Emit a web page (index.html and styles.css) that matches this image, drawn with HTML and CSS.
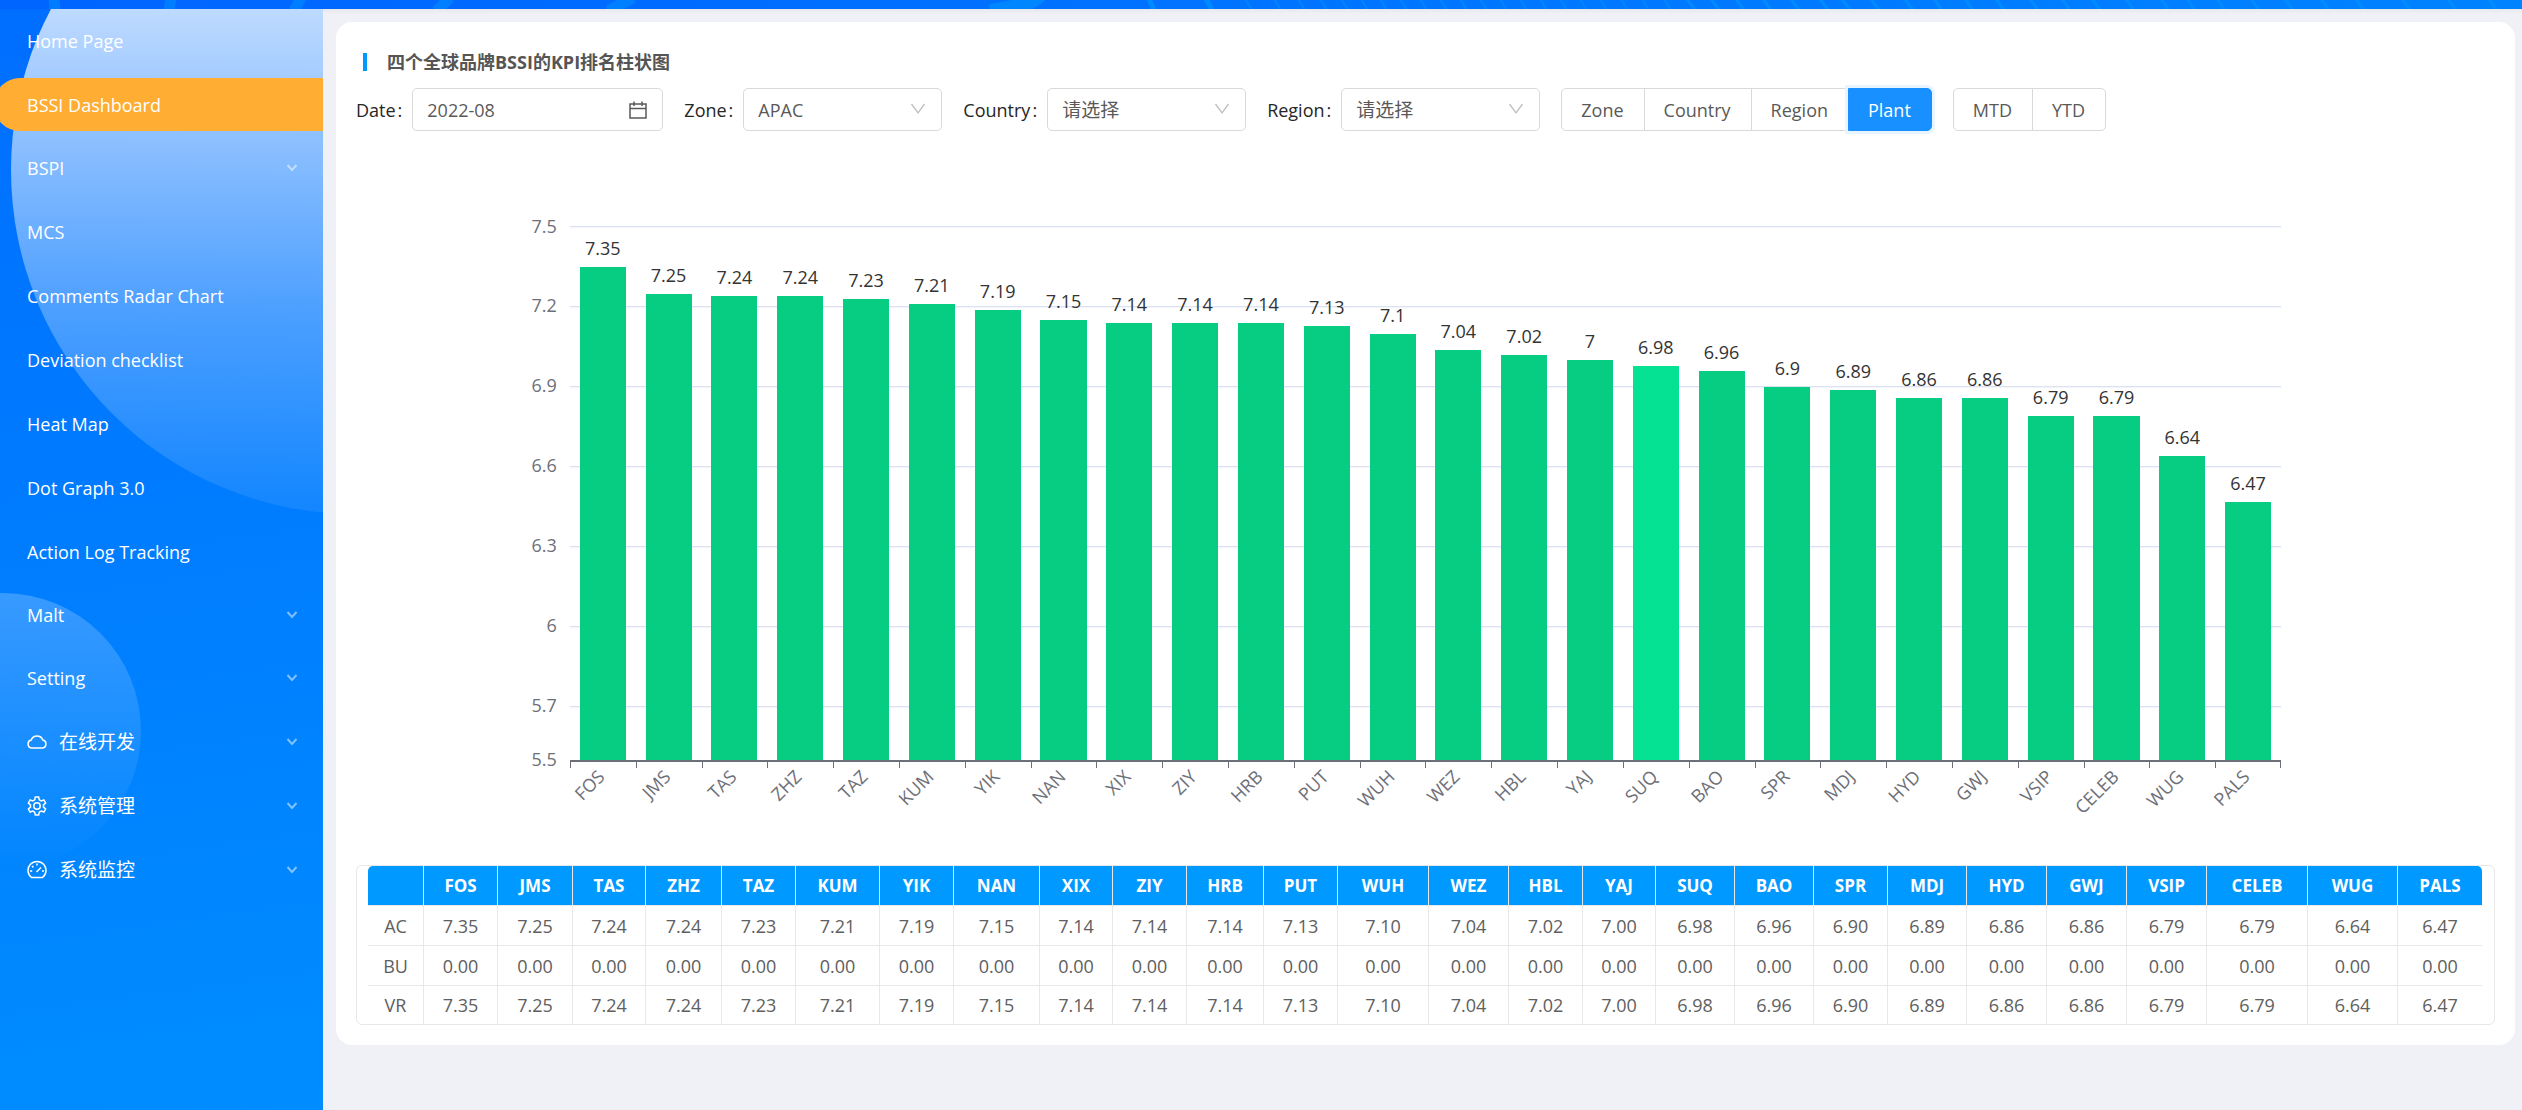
FILE: index.html
```html
<!DOCTYPE html>
<html lang="zh-CN">
<head>
<meta charset="utf-8">
<meta name="viewport" content="width=device-width, initial-scale=1">
<title>BSSI Dashboard</title>
<link rel="stylesheet" href="styles.css">
</head>
<body>
<svg width="0" height="0" class="sprite" aria-hidden="true">
  <symbol id="down" viewBox="0 0 12 12"><path d="M1.500 3 6 8l4.500-5" fill="none" stroke="currentColor" stroke-width="2"/></symbol>
  <symbol id="caret" viewBox="0 0 16 16"><path d="M1.500 3 8 12l6.500-9" fill="none" stroke="currentColor" stroke-width="1.300"/></symbol>
</svg>

<header class="topbar">
  <svg width="2522" height="9" viewBox="0 0 2522 9" aria-hidden="true">
    <g fill="none" stroke="#0090ff">
      <path stroke-opacity=".55" stroke-width="11" d="M54-1 55 10M171-1 169 10M301-2 294 11M450-2 436 11M633-2 608 11"/>
      <path stroke-opacity=".7" stroke-width="16" d="M1040-6Q1026 8 990 12"/>
      <path stroke-opacity=".8" stroke-width="5" d="M1149-1 1154 10M1206-1 1212 10"/>
      <path stroke-opacity=".6" stroke-width="2" d="M1245-1 1252 10M1274-1 1281 10M1298-1 1305 10M1320-1 1327 10M1341-1 1348 10M1361-1 1368 10M1380-1 1387 10M1400-1 1407 10M1420-1 1427 10M1440-1 1447 10M1460-1 1467 10M1480-1 1487 10M1500-1 1507 10M1520-1 1527 10M1540-1 1547 10M1560-1 1567 10M1580-1 1587 10M1600-1 1607 10M1621-1 1628 10M1642-1 1649 10M1664-1 1671 10"/>
      <path stroke-opacity=".8" stroke-width="3" d="M1687-1 1695 10M1711-1 1719 10M1736-1 1744 10M1763-1 1771 10M1791-1 1799 10M1820-1 1828 10M1842-1 1850 10M1871-1 1879 10M1905-1 1913 10M1934-1 1942 10M1965-1 1973 10M1996-1 2004 10M2030-1 2038 10M2062-1 2070 10M2092-1 2100 10M2126-1 2134 10M2161-1 2169 10M2187-1 2195 10M2217-1 2225 10M2251-1 2259 10M2285-1 2293 10M2321-1 2329 10M2356-1 2364 10M2402-1 2410 10M2448-1 2456 10M2489-1 2497 10"/>
    </g>
  </svg>
</header>

<div class="layout">
  <nav class="sidebar" aria-label="Main">
    <ul class="menu">
      <li><a class="item" href="#">Home Page</a></li>
      <li><a class="item active" href="#" aria-current="page">BSSI Dashboard</a></li>
      <li><button class="item sub" type="button"><span class="label">BSPI</span><svg class="down"><use href="#down"/></svg></button></li>
      <li><a class="item" href="#">MCS</a></li>
      <li><a class="item" href="#">Comments Radar Chart</a></li>
      <li><a class="item" href="#">Deviation checklist</a></li>
      <li><a class="item" href="#">Heat Map</a></li>
      <li><a class="item" href="#">Dot Graph 3.0</a></li>
      <li><a class="item" href="#">Action Log Tracking</a></li>
      <li><button class="item sub" type="button"><span class="label">Malt</span><svg class="down"><use href="#down"/></svg></button></li>
      <li><button class="item sub" type="button"><span class="label">Setting</span><svg class="down"><use href="#down"/></svg></button></li>
      <li><button class="item zh" type="button">
        <svg class="icon" viewBox="0 0 20 20"><path d="M5 16a4 4 0 0 1-.8-7.900 6.200 6.200 0 0 1 11.600 0A4 4 0 0 1 15 16z"/></svg>
        <span class="label">在线开发</span><svg class="down"><use href="#down"/></svg></button></li>
      <li><button class="item zh" type="button">
        <svg class="icon" viewBox="0 0 20 20"><path d="M8.300 1h3.400l.6 2.800 1.900 1.100 2.700-.9 1.700 3-2.100 1.900v2.200l2.100 1.900-1.700 3-2.700-.9-1.900 1.100-.6 2.800H8.300l-.6-2.800-1.900-1.100-2.700.9-1.700-3 2.100-1.900V8.900L1.400 7l1.700-3 2.700.9 1.900-1.100z"/><circle cx="10" cy="10" r="3.200"/></svg>
        <span class="label">系统管理</span><svg class="down"><use href="#down"/></svg></button></li>
      <li><button class="item zh" type="button">
        <svg class="icon" viewBox="0 0 20 20"><path d="M4.500 17.500a9 9 0 1 1 11 0zM10 3.500v2M3 11h2.200M15 11h2M5 6l1.400 1.400M9.500 12l4.500-4.500"/></svg>
        <span class="label">系统监控</span><svg class="down"><use href="#down"/></svg></button></li>
    </ul>
  </nav>

  <main class="content">
    <section class="card">
      <h1 class="title">四个全球品牌BSSI的KPI排名柱状图</h1>

      <form class="filters">
        <div class="field"><label for="date">Date<span class="colon">:</span></label>
          <span class="control date"><input id="date" type="text" value="2022-08">
            <svg class="cal" viewBox="0 0 18 18"><path d="M1 3h16v14H1zM1 7.500h16M5 .5V5M13 .5V5"/></svg></span></div>
        <div class="field"><label for="zone">Zone<span class="colon">:</span></label>
          <span class="control"><select id="zone"><option>APAC</option></select><svg class="caret"><use href="#caret"/></svg></span></div>
        <div class="field"><label for="country">Country<span class="colon">:</span></label>
          <span class="control"><select id="country" class="zh"><option>请选择</option></select><svg class="caret"><use href="#caret"/></svg></span></div>
        <div class="field"><label for="region">Region<span class="colon">:</span></label>
          <span class="control"><select id="region" class="zh"><option>请选择</option></select><svg class="caret"><use href="#caret"/></svg></span></div>
        <div class="group">
          <button type="button">Zone</button><button type="button">Country</button><button type="button">Region</button><button type="button" class="on">Plant</button>
        </div>
        <div class="group">
          <button type="button">MTD</button><button type="button">YTD</button>
        </div>
      </form>

      <figure class="chart">
        <div class="plot">
          <div class="scale">
            <span style="--v:7.5"><i>7.5</i></span><span style="--v:7.2"><i>7.2</i></span><span style="--v:6.9"><i>6.9</i></span><span style="--v:6.6"><i>6.6</i></span><span style="--v:6.3"><i>6.3</i></span><span style="--v:6"><i>6</i></span><span style="--v:5.7"><i>5.7</i></span><span class="base" style="--v:5.5"><i>5.5</i></span>
          </div>
          <div class="bars">
            <div class="band"><span>7.35</span><b style="--v:7.35"></b></div>
            <div class="band"><span>7.25</span><b style="--v:7.25"></b></div>
            <div class="band"><span>7.24</span><b style="--v:7.24"></b></div>
            <div class="band"><span>7.24</span><b style="--v:7.24"></b></div>
            <div class="band"><span>7.23</span><b style="--v:7.23"></b></div>
            <div class="band"><span>7.21</span><b style="--v:7.21"></b></div>
            <div class="band"><span>7.19</span><b style="--v:7.19"></b></div>
            <div class="band"><span>7.15</span><b style="--v:7.15"></b></div>
            <div class="band"><span>7.14</span><b style="--v:7.14"></b></div>
            <div class="band"><span>7.14</span><b style="--v:7.14"></b></div>
            <div class="band"><span>7.14</span><b style="--v:7.14"></b></div>
            <div class="band"><span>7.13</span><b style="--v:7.13"></b></div>
            <div class="band"><span>7.1</span><b style="--v:7.1"></b></div>
            <div class="band"><span>7.04</span><b style="--v:7.04"></b></div>
            <div class="band"><span>7.02</span><b style="--v:7.02"></b></div>
            <div class="band"><span>7</span><b style="--v:7"></b></div>
            <div class="band hover"><span>6.98</span><b style="--v:6.98"></b></div>
            <div class="band"><span>6.96</span><b style="--v:6.96"></b></div>
            <div class="band"><span>6.9</span><b style="--v:6.9"></b></div>
            <div class="band"><span>6.89</span><b style="--v:6.89"></b></div>
            <div class="band"><span>6.86</span><b style="--v:6.86"></b></div>
            <div class="band"><span>6.86</span><b style="--v:6.86"></b></div>
            <div class="band"><span>6.79</span><b style="--v:6.79"></b></div>
            <div class="band"><span>6.79</span><b style="--v:6.79"></b></div>
            <div class="band"><span>6.64</span><b style="--v:6.64"></b></div>
            <div class="band"><span>6.47</span><b style="--v:6.47"></b></div>
          </div>
        </div>
        <div class="axis">
          <div><span>FOS</span></div><div><span>JMS</span></div><div><span>TAS</span></div><div><span>ZHZ</span></div><div><span>TAZ</span></div><div><span>KUM</span></div><div><span>YIK</span></div><div><span>NAN</span></div><div><span>XIX</span></div><div><span>ZIY</span></div><div><span>HRB</span></div><div><span>PUT</span></div><div><span>WUH</span></div><div><span>WEZ</span></div><div><span>HBL</span></div><div><span>YAJ</span></div><div><span>SUQ</span></div><div><span>BAO</span></div><div><span>SPR</span></div><div><span>MDJ</span></div><div><span>HYD</span></div><div><span>GWJ</span></div><div><span>VSIP</span></div><div><span>CELEB</span></div><div><span>WUG</span></div><div><span>PALS</span></div>
        </div>
      </figure>

      <div class="table-box">
        <table>
          <colgroup>
            <col width="56"><col width="74"><col width="75"><col width="73"><col width="76"><col width="74"><col width="84"><col width="74"><col width="86"><col width="73"><col width="74"><col width="77"><col width="74"><col width="91"><col width="80"><col width="74"><col width="73"><col width="79"><col width="79"><col width="74"><col width="79"><col width="80"><col width="80"><col width="80"><col width="101"><col width="90"><col width="84">
          </colgroup>
          <thead>
            <tr><th></th><th>FOS</th><th>JMS</th><th>TAS</th><th>ZHZ</th><th>TAZ</th><th>KUM</th><th>YIK</th><th>NAN</th><th>XIX</th><th>ZIY</th><th>HRB</th><th>PUT</th><th>WUH</th><th>WEZ</th><th>HBL</th><th>YAJ</th><th>SUQ</th><th>BAO</th><th>SPR</th><th>MDJ</th><th>HYD</th><th>GWJ</th><th>VSIP</th><th>CELEB</th><th>WUG</th><th>PALS</th></tr>
          </thead>
          <tbody>
            <tr><td>AC</td><td>7.35</td><td>7.25</td><td>7.24</td><td>7.24</td><td>7.23</td><td>7.21</td><td>7.19</td><td>7.15</td><td>7.14</td><td>7.14</td><td>7.14</td><td>7.13</td><td>7.10</td><td>7.04</td><td>7.02</td><td>7.00</td><td>6.98</td><td>6.96</td><td>6.90</td><td>6.89</td><td>6.86</td><td>6.86</td><td>6.79</td><td>6.79</td><td>6.64</td><td>6.47</td></tr>
            <tr><td>BU</td><td>0.00</td><td>0.00</td><td>0.00</td><td>0.00</td><td>0.00</td><td>0.00</td><td>0.00</td><td>0.00</td><td>0.00</td><td>0.00</td><td>0.00</td><td>0.00</td><td>0.00</td><td>0.00</td><td>0.00</td><td>0.00</td><td>0.00</td><td>0.00</td><td>0.00</td><td>0.00</td><td>0.00</td><td>0.00</td><td>0.00</td><td>0.00</td><td>0.00</td><td>0.00</td></tr>
            <tr><td>VR</td><td>7.35</td><td>7.25</td><td>7.24</td><td>7.24</td><td>7.23</td><td>7.21</td><td>7.19</td><td>7.15</td><td>7.14</td><td>7.14</td><td>7.14</td><td>7.13</td><td>7.10</td><td>7.04</td><td>7.02</td><td>7.00</td><td>6.98</td><td>6.96</td><td>6.90</td><td>6.89</td><td>6.86</td><td>6.86</td><td>6.79</td><td>6.79</td><td>6.64</td><td>6.47</td></tr>
          </tbody>
        </table>
      </div>
    </section>
  </main>
</div>
</body>
</html>
```

FILE: styles.css
```css
* { box-sizing: border-box; }

body {
  margin: 0;
  min-height: 100vh;
  display: flex;
  flex-direction: column;
  background: #f0f1f6;
  color: #606266;
  font: 18px/24px "Open Sans", "Noto Sans CJK SC", sans-serif;
}

button, input, select { font: inherit; color: inherit; margin: 0; }
.sprite { position: absolute; }
.zh { font-size: 19px; }

/* top bar */
.topbar {
  height: 9px;
  overflow: hidden;
  background: linear-gradient(90deg, #0064ff, #0083ff);
}
.topbar svg { display: block; }

.layout { flex: 1; display: flex; }

/* sidebar */
.sidebar {
  flex: none;
  width: 323px;
  position: relative;
  overflow: hidden;
  background: linear-gradient(172deg, #006eff, #008dff);
}
.sidebar::before, .sidebar::after {
  content: "";
  position: absolute;
  border-radius: 50%;
}
.sidebar::before {
  width: 688px;
  height: 688px;
  left: 11px;
  top: -183px;
  background: linear-gradient(180deg, rgba(255, 255, 255, .95), rgba(255, 255, 255, .74) 27%, rgba(255, 255, 255, .3) 70%, rgba(255, 255, 255, .07));
}
.sidebar::after {
  width: 276px;
  height: 276px;
  left: -135px;
  top: 584px;
  background: linear-gradient(180deg, rgba(255, 255, 255, .22), rgba(255, 255, 255, 0));
}
.menu {
  position: relative;
  z-index: 1;
  list-style: none;
  margin: 0;
  padding: 5px 0 0;
  display: flex;
  flex-direction: column;
  gap: 11px;
}
.menu li { margin-left: -6px; }
.item {
  width: 100%;
  height: 53px;
  padding: 0 25px 0 33px;
  display: flex;
  align-items: center;
  border: 0;
  background: none;
  color: #fff;
  text-align: left;
  text-decoration: none;
}
.sub { height: 52px; }
.item.active { background: #ffad33; border-radius: 26px 0 0 26px; }
.item .label { flex: 1; }
.item .down { width: 12px; height: 12px; opacity: .5; }
.icon {
  width: 20px;
  height: 20px;
  margin-right: 12px;
  fill: none;
  stroke: currentColor;
  stroke-width: 1.5;
}

/* card */
.content {
  flex: 1;
  min-width: 0;
  padding: 13px 7px 13px 13px;
  background: linear-gradient(#e6e8ec, #f0f1f6 5px);
}
.card {
  background: #fff;
  border-radius: 16px;
  padding: 27px 20px 20px;
}
.title {
  margin: 0 0 13px 7px;
  display: flex;
  align-items: center;
  gap: 20px;
  font-size: 18px;
  line-height: 26px;
  font-weight: 700;
  color: #555;
}
.title::before { content: ""; width: 4px; height: 18px; background: #09f; }

/* filters */
.filters { display: flex; flex-wrap: wrap; gap: 21px; }
.field { display: flex; align-items: center; }
.field label { color: #262626; margin-right: 10px; white-space: nowrap; }
.colon { margin-left: 2px; }
.control { display: block; position: relative; width: 199px; }
.control.date { width: 251px; }
.control input, .control select {
  display: block;
  width: 100%;
  height: 43px;
  padding: 0 14px;
  border: 1px solid #d9d9d9;
  border-radius: 5px;
  background: #fff;
  appearance: none;
  color: #595959;
}
.caret, .cal { position: absolute; top: 50%; margin-top: -9px; pointer-events: none; }
.caret { width: 16px; height: 16px; right: 16px; color: #bfbfbf; }
.cal { width: 18px; height: 18px; right: 16px; fill: none; stroke: #595959; stroke-width: 1.5; }
.group { display: flex; }
.group button {
  height: 43px;
  padding: 0 20px 0 19px;
  margin-left: -1px;
  border: 1px solid #d9d9d9;
  background: #fff;
  color: #595959;
}
.group button:first-child { border-radius: 5px 0 0 5px; margin-left: 0; }
.group button:last-child { border-radius: 0 5px 5px 0; }
.group .on {
  background: #1890ff;
  border-color: #1890ff;
  color: #fff;
  box-shadow: 0 0 0 3px #e8f4ff;
}

/* chart */
.chart { margin: 96px 0 0; padding: 0 10%; color: #6e7079; }
.plot { position: relative; height: 533px; }
.scale span {
  position: absolute;
  left: -61px;
  right: 0;
  bottom: calc((var(--v) - 5.5) / 2 * 100%);
  height: 1px;
  display: flex;
  align-items: center;
  gap: 13px;
}
.scale span::after { content: ""; flex: 1; height: 1px; background: #dbe2f0; box-shadow: 0 1px #f3f5fa; }
.scale .base::after { background: none; box-shadow: none; }
.scale i { width: 48px; margin-top: -2px; font-style: normal; text-align: right; }
.bars {
  position: relative;
  display: flex;
  height: 100%;
}
.band {
  flex: 1;
  display: flex;
  flex-direction: column;
  align-items: center;
  justify-content: flex-end;
  color: #333;
}
.band span { line-height: 38px; }
.band b {
  flex: none;
  width: 70%;
  height: calc((var(--v) - 5.5) / 2 * 100%);
  background: #06cd82;
}
.band.hover b { background: #06e293; }
.axis { display: flex; height: 105px; border-top: 2px solid #6e7079; }
.axis div {
  flex: 1;
  background: linear-gradient(#6e7079, #6e7079) left top / 1px 6px no-repeat;
}
.axis div:last-child {
  background: linear-gradient(#6e7079, #6e7079) left top / 1px 6px no-repeat,
    linear-gradient(#6e7079, #6e7079) right top / 1px 6px no-repeat;
}
.axis span {
  width: calc(50% - 2px);
  display: flex;
  justify-content: flex-end;
  line-height: 22px;
  transform: rotate(-45deg);
  transform-origin: 100% 50%;
}

/* table */
.table-box { border: 1px solid #e8e8e8; border-radius: 6px; padding: 0 12px 0 11px; }
table {
  width: 100%;
  table-layout: fixed;
  border-collapse: separate;
  border-spacing: 0;
  text-align: center;
}
th, td { height: 40px; padding: 0; border-right: 1px solid #e8e8e8; border-bottom: 1px solid #e8e8e8; }
td { color: #606060; }
th:last-child, td:last-child { border-right: 0; }
tbody tr:last-child td { border-bottom: 0; height: 38px; }
th { background: #09f; color: #fff; font-size: 17px; font-weight: 700; }
th:first-child { border-top-left-radius: 5px; }
th:last-child { border-top-right-radius: 5px; }
```
